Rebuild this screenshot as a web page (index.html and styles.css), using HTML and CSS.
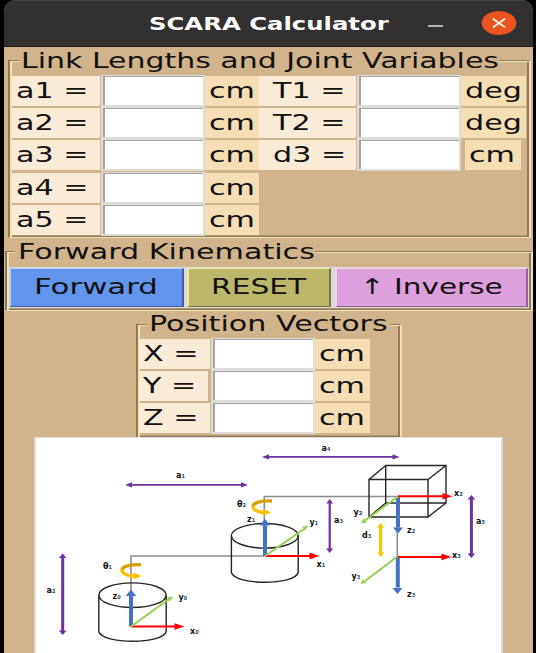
FILE: index.html
```html
<!DOCTYPE html>
<html lang="en">
<head>
<meta charset="utf-8">
<title>SCARA Calculator</title>
<link rel="stylesheet" href="styles.css">
</head>
<body>
<main class="window">
  <header class="titlebar">
    <h1 class="title"><span class="wide">SCARA Calculator</span></h1>
    <span class="minimize"></span>
    <span class="close"><svg viewBox="0 0 36 26"><ellipse cx="18" cy="13" rx="17.3" ry="12" fill="#e95420"/><path d="M12 8.8 24 17.4M24 8.8 12 17.4" stroke="#fff" stroke-width="1.7"/></svg></span>
  </header>

  <section class="frame links">
    <h2 class="legend"><span class="wide">Link Lengths and Joint Variables</span></h2>
    <div class="grid">
      <div class="label"><span class="wide">a1 =</span></div><div class="entry"></div><div class="unit"><span class="wide">cm</span></div>
      <div class="label joint"><span class="wide">T1 =</span></div><div class="entry"></div><div class="unit"><span class="wide">deg</span></div>
      <div class="label"><span class="wide">a2 =</span></div><div class="entry"></div><div class="unit"><span class="wide">cm</span></div>
      <div class="label joint"><span class="wide">T2 =</span></div><div class="entry"></div><div class="unit"><span class="wide">deg</span></div>
      <div class="label"><span class="wide">a3 =</span></div><div class="entry"></div><div class="unit"><span class="wide">cm</span></div>
      <div class="label joint"><span class="wide">d3 =</span></div><div class="entry"></div><div class="unit narrow"><span class="wide">cm</span></div>
      <div class="label first"><span class="wide">a4 =</span></div><div class="entry"></div><div class="unit"><span class="wide">cm</span></div>
      <div class="label first"><span class="wide">a5 =</span></div><div class="entry"></div><div class="unit"><span class="wide">cm</span></div>
    </div>
  </section>

  <section class="frame kinematics">
    <h2 class="legend"><span class="wide">Forward Kinematics</span></h2>
    <div class="buttons">
      <button class="btn forward"><span class="wide">Forward</span></button>
      <button class="btn reset"><span class="wide">RESET</span></button>
      <button class="btn inverse"><span class="wide">↑ Inverse</span></button>
    </div>
  </section>

  <section class="frame position">
    <h2 class="legend"><span class="wide">Position Vectors</span></h2>
    <div class="grid">
      <div class="label"><span class="wide">X =</span></div><div class="entry"></div><div class="unit"><span class="wide">cm</span></div>
      <div class="label short"><span class="wide">Y =</span></div><div class="entry"></div><div class="unit"><span class="wide">cm</span></div>
      <div class="label"><span class="wide">Z =</span></div><div class="entry"></div><div class="unit"><span class="wide">cm</span></div>
    </div>
  </section>

  <div class="diagram">
    <svg viewBox="36 438.5 465 214.5" width="465" height="214.5">
      <!-- link lines -->
      <g class="link">
        <path d="M131 627V556.5H264.3"/>
        <path d="M264.3 556V497H398"/>
        <path d="M397.3 497V557"/>
      </g>
      <!-- cylinders -->
      <g class="solid">
        <ellipse cx="132.5" cy="595.7" rx="33.7" ry="12.3"/>
        <path d="M98.8 595.7V632C102 645 163 645 166.2 632V595.7"/>
        <ellipse cx="264.8" cy="536.3" rx="33.4" ry="12.3"/>
        <path d="M231.4 536.3V573C235 586 295 586 298.2 573V536.3"/>
        <!-- cube -->
        <path d="M369 480H428V517.5H369ZM385.7 466H446V503.5H385.7ZM369 480 385.7 466M428 480 446 466M369 517.5 385.7 503.5M428 517.5 446 503.5"/>
      </g>
      <!-- dimension arrows -->
      <g class="dim">
        <path d="M129 485.4H244M266 457.4H395"/>
        <path d="M125 485.4l7-2.6v5.2zM248 485.4l-7-2.6v5.2zM262 457.4l7-2.6v5.2zM399.5 457.4l-7-2.6v5.2z" class="head"/>
        <path class="thick" d="M62.7 557V632M471.4 499V555"/>
        <path d="M329.7 503V550" class="mid"/>
        <path class="head" d="M62.7 554l3.8 4.5h-7.6zM62.7 635.5l3.8-4.5h-7.6zM471.4 495.5l3.8 4.5h-7.6zM471.4 558.5l3.8-4.5h-7.6zM329.7 499.5l3.5 4.5h-7zM329.7 553.5l3.5-4.5h-7z"/>
      </g>
      <g class="stroke-d"><path d="M380.6 527V554"/><path class="head" d="M380.6 523.5l3.5 4.5h-7zM380.6 557.5l3.5-4.5h-7z"/></g>
      <!-- coordinate axes -->
      <g class="ax-z">
        <path d="M131 627V596M265 556.5V526M398 497V528M397.8 557V588"/>
        <path class="head" d="M131 590l5.2 6.5h-10.4zM265 519.5l5.2 6.5h-10.4zM398 534l-5-6h10zM397.5 594.5l-5-6h10z"/>
      </g>
      <g class="ax-x">
        <path d="M131 627H176M265 556.4H311M398 496.7H444M398 557.4H443"/>
        <path class="head" d="M184.5 627l-10-3.3v6.6zM319.5 556.4l-10-3.3v6.6zM452.5 496.7l-10-3.3v6.6zM451.5 557.4l-10-3.3v6.6z"/>
      </g>
      <g class="ax-y">
        <path d="M131 627 168.5 600M265 556.5 304 529.5M398 497 365 521M397.5 557 365 581.5"/>
        <path class="head" d="M173.5 597.3l-3.8 4.6-2.6-4.2zM308.5 526.5l-3.8 4.6-2.6-4.2zM361 523.7l2.5-4.7 3.2 4.2zM360.5 584.2l2.5-4.7 3.2 4.2z"/>
      </g>
      <!-- rotation arrows -->
      <g class="rot">
        <path class="dark" d="M141 565.2C130 564.6 122 567 122 570.5"/><path d="M121.8 570C122 574 128 576.2 135 576.6"/><path class="head" d="M133.8 572.8 141.5 576.6 133.8 580z"/>
        <path class="dark" d="M272 501.5C261 500.9 253 503.4 253 507"/><path d="M252.8 506.5C253 510.5 258 512.5 264 513"/><path class="head" d="M263 509.2 271 513 263 516.4z"/>
      </g>
      <g class="marks">
        <text x="176" y="478.4">a<tspan>₁</tspan></text>
        <text x="321.5" y="451">a<tspan>₄</tspan></text>
        <text x="46.5" y="593.5">a<tspan>₂</tspan></text>
        <text x="334" y="523.7">a<tspan>₃</tspan></text>
        <text x="476" y="524">a<tspan>₅</tspan></text>
        <text x="103" y="569.2">θ<tspan>₁</tspan></text>
        <text x="237" y="507">θ<tspan>₂</tspan></text>
        <text x="112.5" y="599">z<tspan>₀</tspan></text>
        <text x="178.5" y="600.5">y<tspan>₀</tspan></text>
        <text x="190" y="634.5">x<tspan>₀</tspan></text>
        <text x="247" y="522.5">z<tspan>₁</tspan></text>
        <text x="309.5" y="525.5">y<tspan>₁</tspan></text>
        <text x="316.5" y="567.5">x<tspan>₁</tspan></text>
        <text x="454" y="496.5">x<tspan>₂</tspan></text>
        <text x="353.5" y="515">y<tspan>₂</tspan></text>
        <text x="407" y="533">z<tspan>₂</tspan></text>
        <text x="362" y="538.7">d<tspan>₃</tspan></text>
        <text x="452" y="558">x<tspan>₃</tspan></text>
        <text x="351.5" y="579">y<tspan>₃</tspan></text>
        <text x="407" y="597">z<tspan>₃</tspan></text>
      </g>
    </svg>
  </div>
</main>
</body>
</html>
```
FILE: styles.css
```css
* { box-sizing: border-box; }

html, body { height: 100%; }

body {
  margin: 0;
  overflow: hidden;
  background: #000;
  font: 22px/28px "DejaVu Sans", sans-serif;
  color: #111;
}

h1, h2 { margin: 0; font: inherit; }

.window {
  height: 653px;
  margin: 0 3px 0 4px;
  background: #d2b48c;
  border-radius: 12px 12px 0 0;
  overflow: hidden;
  display: flex;
  flex-direction: column;
}

/* Interface text uses a horizontally expanded face */
.wide {
  display: inline-block;
  white-space: nowrap;
  transform: scaleX(1.37);
  transform-origin: left center;
}

.titlebar {
  flex: none;
  height: 47px;
  display: flex;
  align-items: center;
  background: #333031;
  border-top: 1px solid #454243;
  border-bottom: 1px solid #1f1d1d;
  color: #fff;
}
.title { width: 279px; margin-left: 145px; font-weight: bold; font-size: 17.5px; }
.title .wide { transform: scaleX(1.39); }
.minimize { width: 15px; height: 1.5px; margin-top: 5px; background: #b5b3b3; }
.close { width: 36px; height: 26px; margin-left: 38px; margin-top: -1px; }
.close svg { display: block; width: 36px; height: 26px; }

.frame {
  flex: none;
  border-style: solid;
  border-color: #8f7a5c #f1e3b0 #f1e3b0 #8f7a5c;
  border-width: 1px 2px 1.5px 2px;
  box-shadow: inset 2px 1px #f1e3b0, inset -2px -1.5px #8f7a5c;
}
.legend { width: max-content; background: #d2b48c; height: 28px; margin-top: -14px; line-height: 27px; }

.links { margin: 13px 2px 0 4px; height: 178px; }
.links .legend { width: 479px; margin-left: 10px; padding-left: 1px; }
.links .legend .wide { transform: scaleX(1.362); }

.grid { display: grid; grid-auto-rows: 32.2px; padding-left: 2px; }
.links .grid { grid-template-columns: 89px 104px 54px 98px 104px 65px; padding-top: 1px; }

.label, .unit { height: 30px; line-height: 30px; }
.label { background: #faebd7; margin-right: 1px; padding-left: 3.5px; }
.label.joint { padding-left: 14px; }
.label.first { grid-column: 1; }
.label.short { margin-right: 3px; }
.unit { background: #f5deb3; padding-left: 4px; }
.unit.narrow { margin: 0 5px 0 4px; }
.entry {
  height: 32px;
  margin-top: -1px;
  background: #fff;
  border: 2px solid #dcdcdc;
  border-width: 1px 2px 2px;
  box-shadow: inset 2px 1px #a3a3a3;
}

.kinematics { margin: 13px 0 0 1px; height: 60px; }
.kinematics .legend { width: 300px; margin-left: 8px; padding-left: 3px; height: 29px; }
.buttons { display: flex; margin-left: 2px; height: 41px; background: #d9d9d9; padding: 1px 1px 1px 0; margin-right: 2px; }
.btn {
  font: inherit;
  color: #111;
  text-align: left;
  padding: 0 0 2px;
  border: solid;
  border-width: 1px 2px 1.5px;
  line-height: 34px;
}
.forward { width: 175px; background: #6495ed; border-color: #b9d0ff #3f609b #3f609b #b9d0ff; padding-left: 23px; }
.forward .wide { transform: scaleX(1.4); }
.reset { width: 144px; margin-left: 3px; background: #bdb76b; border-color: #f0eba0 #77733f #77733f #f0eba0; padding-left: 22px; }
.reset .wide { transform: scaleX(1.35); }
.inverse { flex: 1; margin-left: 4px; background: #dda0dd; border-color: #f3d5f3 #8d658d #8d658d #f3d5f3; padding-left: 23px; }
.inverse .wide { transform: scaleX(1.34); }

.position { margin: 13px 0 0 132px; width: 266px; height: 114px; }
.position .legend { width: 243px; margin-left: 9px; padding-left: 2px; line-height: 26px; }
.position .grid { grid-template-columns: 72px 104px 55px; padding-left: 1px; }

.diagram {
  flex: none;
  width: 469px;
  height: 230px;
  margin-left: 30px;
  margin-top: -1px;
  background: #fff;
  border: 2px solid #dcdcdc;
  border-top-width: 1px;
}
.diagram svg { display: block; }
.diagram path, .diagram ellipse { fill: none; }
.link { stroke: #8c8c8c; stroke-width: 1.6; }
.solid { stroke: #262626; stroke-width: 1.4; }
.dim { stroke: #7030a0; stroke-width: 1.6; }
.dim .thick { stroke-width: 3; }
.dim .mid { stroke-width: 2.2; }
.stroke-d { stroke: #ffc000; stroke-width: 3; }
.ax-z { stroke: #4472c4; stroke-width: 4; }
.ax-x { stroke: #f00; stroke-width: 2; }
.ax-y { stroke: #92d050; stroke-width: 2; }
.rot { stroke: #ffc000; stroke-width: 3.4; }
.rot .dark { stroke: #d5a000; }
.diagram .head { stroke: none; }
.diagram .dim .head { fill: #7030a0; }
.diagram .stroke-d .head, .diagram .rot .head { fill: #ffc000; }
.diagram .ax-z .head { fill: #4472c4; }
.diagram .ax-x .head { fill: #f00; }
.diagram .ax-y .head { fill: #92d050; }
.marks { font: bold 8px "DejaVu Sans", sans-serif; fill: #111; }
.marks tspan { font-size: 8px; fill: #2b4a66; }
```
